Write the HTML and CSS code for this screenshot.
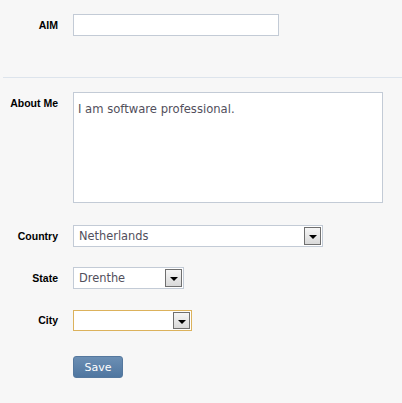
FILE: index.html
```html
<!DOCTYPE html>
<html>
<head>
<meta charset="utf-8">
<link rel="stylesheet" href="styles.css">
</head>
<body>
<form class="form">
  <div class="row row-aim">
    <label class="lbl">AIM</label>
    <div class="field"><div class="input input-aim"></div></div>
  </div>
  <div class="sep"></div>
  <div class="row row-about">
    <label class="lbl lbl-top">About Me</label>
    <div class="field"><div class="textarea">I am software professional.</div></div>
  </div>
  <div class="row row-country">
    <label class="lbl">Country</label>
    <div class="field">
      <div class="select select-country"><span class="value">Netherlands</span><span class="arrow"></span></div>
    </div>
  </div>
  <div class="row row-state">
    <label class="lbl">State</label>
    <div class="field">
      <div class="select select-state"><span class="value">Drenthe</span><span class="arrow"></span></div>
    </div>
  </div>
  <div class="row row-city">
    <label class="lbl">City</label>
    <div class="field">
      <div class="select select-city focus"><span class="value"></span><span class="arrow"></span></div>
    </div>
  </div>
  <div class="row row-save">
    <span></span>
    <div class="field"><button type="button" class="btn">Save</button></div>
  </div>
</form>
</body>
</html>
```

FILE: styles.css
```css
html, body {
  margin: 0;
  padding: 0;
  background: #f7f7f7;
}
body {
  width: 402px;
  height: 403px;
  overflow: hidden;
  font-family: "DejaVu Sans", Verdana, sans-serif;
}
.form {
  display: flex;
  flex-direction: column;
  padding-top: 14px;
}
.row {
  display: grid;
  grid-template-columns: 58px 1fr;
  column-gap: 15px;
  align-items: center;
}
.lbl {
  font-family: "Liberation Sans", Arial, sans-serif;
  font-weight: bold;
  font-size: 10.5px;
  color: #000;
  text-align: right;
  line-height: 13px;
}
.lbl-top {
  align-self: start;
  padding-top: 5px;
}
.input, .textarea, .select {
  box-sizing: border-box;
  background: #fff;
  border: 1px solid #c3cbd6;
}
.input-aim {
  width: 206px;
  height: 22px;
}
.sep {
  height: 1px;
  background: #dde4ec;
  margin: 41px 0 14px 3px;
}
.textarea {
  width: 310px;
  height: 111px;
  padding: 9px 4px;
  font-size: 11.6px;
  line-height: 14px;
  color: #524f5c;
}
.row-country { margin-top: 22px; }
.row-state { margin-top: 20px; }
.row-city { margin-top: 21px; }
.row-save { margin-top: 25px; }
.select {
  height: 22px;
  display: flex;
  align-items: center;
  padding: 0 1px 0 5px;
  font-size: 11.4px;
  color: #524f5c;
}
.select-country { width: 250px; }
.select-state { width: 111px; }
.select-city { width: 119px; height: 21px; }
.select.focus { border-color: #dcb25c; }
.value { flex: 1; }
.arrow {
  box-sizing: border-box;
  width: 17px;
  height: 18px;
  border: 1px solid #6f6f6f;
  background: linear-gradient(#f6f6f6, #d9d9d9);
  position: relative;
}
.select-city .arrow { height: 17px; }
.arrow::after {
  content: "";
  position: absolute;
  left: 4px;
  top: 7px;
  border-left: 4px solid transparent;
  border-right: 4px solid transparent;
  border-top: 4px solid #000;
}
.btn {
  box-sizing: border-box;
  width: 50px;
  height: 22px;
  border: 1px solid #55789e;
  border-radius: 3px;
  background: linear-gradient(#6c8fb4, #4f76a0);
  color: #fff;
  font-family: "DejaVu Sans", Verdana, sans-serif;
  font-size: 11px;
  padding: 0;
  display: block;
}
```
